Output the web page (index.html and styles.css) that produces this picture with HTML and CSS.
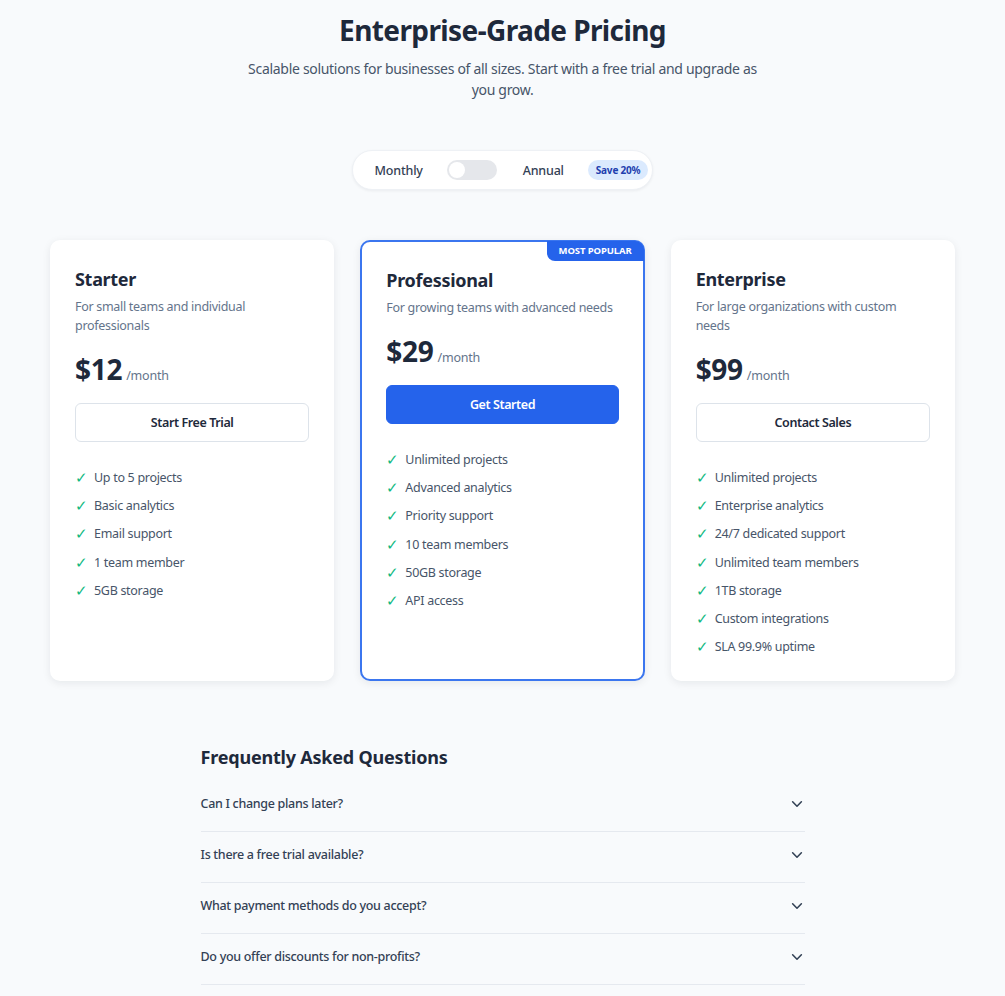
FILE: index.html
```html
<!DOCTYPE html>
<html lang="en">
<head>
<meta charset="utf-8">
<title>Enterprise-Grade Pricing</title>
<link rel="stylesheet" href="styles.css">
</head>
<body>
<main class="page">
  <header class="hero">
    <h1 class="hero-title">Enterprise-Grade Pricing</h1>
    <p class="hero-sub">Scalable solutions for businesses of all sizes. Start with a free trial and upgrade as you grow.</p>
  </header>

  <div class="billing">
    <div class="billing-pill">
      <span class="billing-label">Monthly</span>
      <span class="switch"><span class="knob"></span></span>
      <span class="billing-label">Annual</span>
      <span class="save">Save 20%</span>
    </div>
  </div>

  <section class="plans">
    <article class="card">
      <h2 class="plan-name">Starter</h2>
      <p class="plan-desc">For small teams and individual professionals</p>
      <div class="price"><span class="amount">$12</span><span class="per">/month</span></div>
      <button class="btn btn-outline">Start Free Trial</button>
      <ul class="features">
        <li><span class="check">✓</span>Up to 5 projects</li>
        <li><span class="check">✓</span>Basic analytics</li>
        <li><span class="check">✓</span>Email support</li>
        <li><span class="check">✓</span>1 team member</li>
        <li><span class="check">✓</span>5GB storage</li>
      </ul>
    </article>

    <article class="card card-featured">
      <span class="ribbon">MOST POPULAR</span>
      <h2 class="plan-name">Professional</h2>
      <p class="plan-desc">For growing teams with advanced needs</p>
      <div class="price"><span class="amount">$29</span><span class="per">/month</span></div>
      <button class="btn btn-primary">Get Started</button>
      <ul class="features">
        <li><span class="check">✓</span>Unlimited projects</li>
        <li><span class="check">✓</span>Advanced analytics</li>
        <li><span class="check">✓</span>Priority support</li>
        <li><span class="check">✓</span>10 team members</li>
        <li><span class="check">✓</span>50GB storage</li>
        <li><span class="check">✓</span>API access</li>
      </ul>
    </article>

    <article class="card">
      <h2 class="plan-name">Enterprise</h2>
      <p class="plan-desc">For large organizations with custom needs</p>
      <div class="price"><span class="amount">$99</span><span class="per">/month</span></div>
      <button class="btn btn-outline">Contact Sales</button>
      <ul class="features">
        <li><span class="check">✓</span>Unlimited projects</li>
        <li><span class="check">✓</span>Enterprise analytics</li>
        <li><span class="check">✓</span>24/7 dedicated support</li>
        <li><span class="check">✓</span>Unlimited team members</li>
        <li><span class="check">✓</span>1TB storage</li>
        <li><span class="check">✓</span>Custom integrations</li>
        <li><span class="check">✓</span>SLA 99.9% uptime</li>
      </ul>
    </article>
  </section>

  <section class="faq">
    <h2 class="faq-title">Frequently Asked Questions</h2>
    <div class="faq-item"><span>Can I change plans later?</span><svg class="chev" viewBox="0 0 16 16" width="14" height="14"><path d="M3 5.5l5 5 5-5" fill="none" stroke="#334155" stroke-width="1.8" stroke-linecap="round" stroke-linejoin="round"/></svg></div>
    <div class="faq-item"><span>Is there a free trial available?</span><svg class="chev" viewBox="0 0 16 16" width="14" height="14"><path d="M3 5.5l5 5 5-5" fill="none" stroke="#334155" stroke-width="1.8" stroke-linecap="round" stroke-linejoin="round"/></svg></div>
    <div class="faq-item"><span>What payment methods do you accept?</span><svg class="chev" viewBox="0 0 16 16" width="14" height="14"><path d="M3 5.5l5 5 5-5" fill="none" stroke="#334155" stroke-width="1.8" stroke-linecap="round" stroke-linejoin="round"/></svg></div>
    <div class="faq-item"><span>Do you offer discounts for non-profits?</span><svg class="chev" viewBox="0 0 16 16" width="14" height="14"><path d="M3 5.5l5 5 5-5" fill="none" stroke="#334155" stroke-width="1.8" stroke-linecap="round" stroke-linejoin="round"/></svg></div>
  </section>
</main>
</body>
</html>
```

FILE: styles.css
```css
* { box-sizing: border-box; }

html, body {
  margin: 0;
  background: #f8fafc;
}

body {
  font-family: "Noto Sans", "Open Sans", sans-serif;
  color: #1e293b;
}

.page {
  padding: 10px 50px 40px;
}

.hero {
  text-align: center;
}

.hero-title {
  margin: 0;
  font-size: 28px;
  line-height: 40px;
  font-weight: 700;
  letter-spacing: -0.6px;
  color: #1e293b;
}

.hero-sub {
  margin: 8px auto 0;
  max-width: 520px;
  font-size: 14px;
  line-height: 21px;
  letter-spacing: -0.3px;
  color: #475569;
}

.billing {
  display: flex;
  justify-content: center;
  margin-top: 50px;
}

.billing-pill {
  display: flex;
  align-items: center;
  height: 40px;
  padding: 0 4px 0 22px;
  background: #fff;
  border: 1px solid #eef1f5;
  border-radius: 20px;
  box-shadow: 0 1px 3px rgba(15, 23, 42, 0.06);
}

.billing-label {
  font-size: 12.5px;
  font-weight: 500;
  letter-spacing: -0.2px;
  color: #334155;
}

.switch {
  display: flex;
  align-items: center;
  width: 50px;
  height: 20px;
  margin: 0 26px 0 24px;
  padding: 0 2px;
  background: #e5e7eb;
  border-radius: 10px;
}

.knob {
  width: 16px;
  height: 16px;
  border-radius: 50%;
  background: #fff;
}

.save {
  margin-left: 24px;
  padding: 3px 8px;
  font-size: 10px;
  line-height: 14px;
  font-weight: 700;
  letter-spacing: -0.2px;
  color: #1e40af;
  background: #dbeafe;
  border-radius: 10px;
}

.plans {
  display: grid;
  grid-template-columns: repeat(3, 1fr);
  gap: 26px;
  margin-top: 50px;
}

.card {
  position: relative;
  display: flex;
  flex-direction: column;
  padding: 24px 24px 24px;
  background: #fff;
  border: 1px solid transparent;
  border-radius: 10px;
  box-shadow: 0 2px 8px rgba(15, 23, 42, 0.08);
}

.card-featured {
  border: 2px solid #3b76ef;
  padding: 24px 24px 24px;
}

.ribbon {
  position: absolute;
  top: -1px;
  right: -1px;
  padding: 2px 12px;
  font-size: 9.5px;
  line-height: 16px;
  font-weight: 700;
  letter-spacing: -0.1px;
  color: #fff;
  background: #2563eb;
  border-radius: 0 9px 0 8px;
}

.plan-name {
  margin: 0;
  font-size: 18px;
  line-height: 28px;
  font-weight: 700;
  letter-spacing: -0.3px;
  color: #1e293b;
}

.plan-desc {
  margin: 4px 0 0;
  font-size: 12.5px;
  line-height: 19px;
  letter-spacing: -0.3px;
  color: #64748b;
}

.price {
  display: flex;
  align-items: baseline;
  margin-top: 14px;
}

.amount {
  font-size: 28px;
  line-height: 40px;
  font-weight: 700;
  letter-spacing: -0.3px;
  color: #1e293b;
}

.per {
  margin-left: 4px;
  font-size: 12.5px;
  letter-spacing: -0.2px;
  color: #64748b;
}

.btn {
  display: block;
  width: 100%;
  margin-top: 14px;
  height: 39px;
  font-family: inherit;
  font-size: 12.5px;
  font-weight: 600;
  letter-spacing: -0.4px;
  border-radius: 6px;
  cursor: pointer;
}

.btn-outline {
  background: #fff;
  color: #1e293b;
  border: 1px solid #dde3ea;
}

.btn-primary {
  background: #2563eb;
  color: #fff;
  border: 1px solid #2563eb;
}

.features {
  list-style: none;
  margin: 26px 0 0;
  padding: 0;
}

.features li {
  display: flex;
  align-items: center;
  font-size: 12.5px;
  line-height: 19px;
  letter-spacing: -0.3px;
  color: #475569;
}

.features li + li {
  margin-top: 9.2px;
}

.check {
  width: 19px;
  color: #10b981;
  font-size: 15px;
  font-weight: 400;
}

.faq {
  max-width: 604px;
  margin: 62px auto 0;
}

.faq-title {
  margin: 0 0 10px;
  font-size: 18px;
  line-height: 28px;
  font-weight: 700;
  letter-spacing: -0.2px;
  color: #1e293b;
}

.faq-item {
  display: flex;
  justify-content: space-between;
  align-items: center;
  padding: 13px 0 18px;
  font-size: 12.5px;
  line-height: 19px;
  font-weight: 500;
  letter-spacing: -0.3px;
  color: #334155;
  border-bottom: 1px solid #e5e9ef;
}

.chev {
  margin-right: 1px;
}
```
